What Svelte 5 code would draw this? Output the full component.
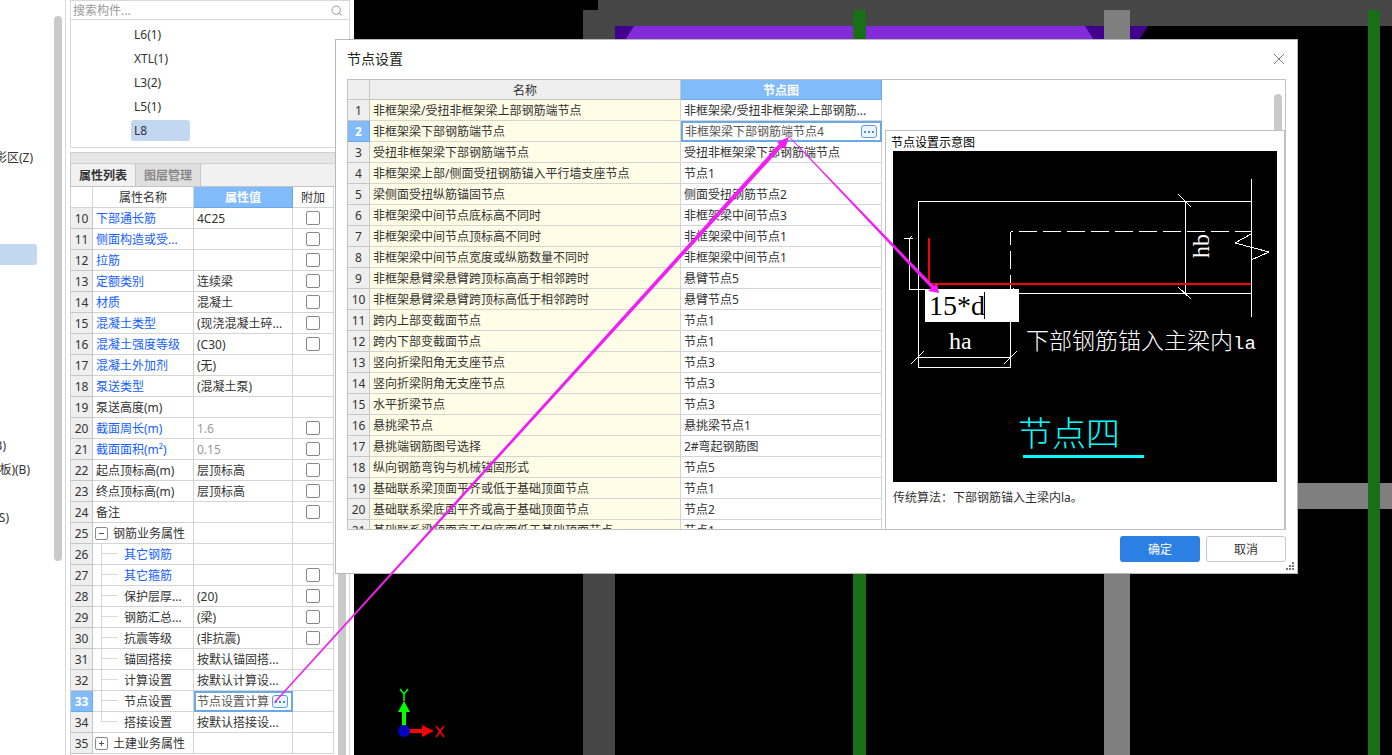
<script>
  const treeItems = [
    { text: "影区(Z)", row: 7, end: 33 },
    { text: "", row: 11, end: 37, selected: true },
    { text: "B)", row: 19, end: 6 },
    { text: "板)(B)", row: 20, end: 30 },
    { text: "S)", row: 22, end: 9 }
  ];

  const components = ["L6(1)", "XTL(1)", "L3(2)", "L5(1)", "L8"];
  let currentComponent = $state("L8");

  const properties = [
    { no: 10, name: "下部通长筋", value: "4C25", link: true, check: true },
    { no: 11, name: "侧面构造或受...", value: "", link: true, check: true },
    { no: 12, name: "拉筋", value: "", link: true, check: true },
    { no: 13, name: "定额类别", value: "连续梁", link: true, check: true },
    { no: 14, name: "材质", value: "混凝土", link: true, check: true },
    { no: 15, name: "混凝土类型", value: "(现浇混凝土碎...", link: true, check: true },
    { no: 16, name: "混凝土强度等级", value: "(C30)", link: true, check: true },
    { no: 17, name: "混凝土外加剂", value: "(无)", link: true },
    { no: 18, name: "泵送类型", value: "(混凝土泵)", link: true },
    { no: 19, name: "泵送高度(m)", value: "" },
    { no: 20, name: "截面周长(m)", value: "1.6", link: true, check: true, muted: true },
    { no: 21, name: "截面面积(m²)", value: "0.15", link: true, check: true, muted: true },
    { no: 22, name: "起点顶标高(m)", value: "层顶标高", check: true },
    { no: 23, name: "终点顶标高(m)", value: "层顶标高", check: true },
    { no: 24, name: "备注", value: "", check: true },
    { no: 25, name: "钢筋业务属性", value: "", group: "open" },
    { no: 26, name: "其它钢筋", value: "", link: true, child: true },
    { no: 27, name: "其它箍筋", value: "", link: true, child: true, check: true },
    { no: 28, name: "保护层厚...", value: "(20)", child: true, check: true },
    { no: 29, name: "钢筋汇总...", value: "(梁)", child: true, check: true },
    { no: 30, name: "抗震等级", value: "(非抗震)", child: true, check: true },
    { no: 31, name: "锚固搭接", value: "按默认锚固搭...", child: true },
    { no: 32, name: "计算设置", value: "按默认计算设...", child: true },
    { no: 33, name: "节点设置", value: "节点设置计算", child: true, editing: true },
    { no: 34, name: "搭接设置", value: "按默认搭接设...", child: true, last: true },
    { no: 35, name: "土建业务属性", value: "", group: "closed" }
  ];

  const nodes = [
    ["非框架梁/受扭非框架梁上部钢筋端节点", "非框架梁/受扭非框架梁上部钢筋..."],
    ["非框架梁下部钢筋端节点", "非框架梁下部钢筋端节点4"],
    ["受扭非框架梁下部钢筋端节点", "受扭非框架梁下部钢筋端节点"],
    ["非框架梁上部/侧面受扭钢筋锚入平行墙支座节点", "节点1"],
    ["梁侧面受扭纵筋锚固节点", "侧面受扭钢筋节点2"],
    ["非框架梁中间节点底标高不同时", "非框架梁中间节点3"],
    ["非框架梁中间节点顶标高不同时", "非框架梁中间节点1"],
    ["非框架梁中间节点宽度或纵筋数量不同时", "非框架梁中间节点1"],
    ["非框架悬臂梁悬臂跨顶标高高于相邻跨时", "悬臂节点5"],
    ["非框架悬臂梁悬臂跨顶标高低于相邻跨时", "悬臂节点5"],
    ["跨内上部变截面节点", "节点1"],
    ["跨内下部变截面节点", "节点1"],
    ["竖向折梁阳角无支座节点", "节点3"],
    ["竖向折梁阴角无支座节点", "节点3"],
    ["水平折梁节点", "节点3"],
    ["悬挑梁节点", "悬挑梁节点1"],
    ["悬挑端钢筋图号选择", "2#弯起钢筋图"],
    ["纵向钢筋弯钩与机械锚固形式", "节点5"],
    ["基础联系梁顶面平齐或低于基础顶面节点", "节点1"],
    ["基础联系梁底面平齐或高于基础顶面节点", "节点2"],
    ["基础联系梁顶面高于但底面低于基础顶面节点", "节点1"]
  ];
  const selectedNode = 1;
</script>

<div class="workspace">
  <nav class="tree" aria-label="构件类型">
    <ul>
      {#each treeItems as item}
        <li class:selected={item.selected} style="grid-row: {item.row}; width: {item.end}px">
          <span>{item.text}</span>
        </li>
      {/each}
    </ul>
    <div class="thumb"></div>
  </nav>

  <aside class="side">
    <div class="search">
      <input type="text" placeholder="搜索构件..." aria-label="搜索构件" />
      <svg width="12" height="12" viewBox="0 0 12 12">
        <circle cx="5.2" cy="5.2" r="4.2" />
        <path d="M8.2 8.2L10.6 10.6" />
      </svg>
    </div>
    <div class="components">
      {#each components as name}
        <button class:current={name === currentComponent} onclick={() => (currentComponent = name)}>{name}</button>
      {/each}
    </div>
    <div class="splitter"></div>
    <div class="tabs">
      <button class="tab active">属性列表</button>
      <button class="tab">图层管理</button>
    </div>
    <div class="props">
      <table class="grid propGrid">
        <colgroup><col class="colNo" /><col class="colName" /><col class="colValue" /><col class="colAdd" /></colgroup>
        <thead>
          <tr><th></th><th>属性名称</th><th class="active">属性值</th><th>附加</th></tr>
        </thead>
        <tbody>
          {#each properties as p}
            <tr>
              <td class="no" class:activeNo={p.editing}>{p.no}</td>
              <td class="name" class:link={p.link} class:child={p.child} class:last={p.last}>
                {#if p.group}
                  <button class="toggle" aria-label={p.name}>
                    <svg width="7" height="7" viewBox="0 0 7 7">
                      <path d={p.group === "open" ? "M1 3.5H6" : "M1 3.5H6M3.5 1V6"} />
                    </svg>
                  </button>
                {/if}{p.name}
              </td>
              {#if p.editing}
                <td class="editing">
                  <div class="editor">
                    <input type="text" value={p.value} aria-label={p.name} />
                    <button class="more" aria-label="更多"><i></i><i></i><i></i></button>
                  </div>
                </td>
              {:else}
                <td class:muted={p.muted}>{p.value}</td>
              {/if}
              <td class="add">
                {#if p.check}<input type="checkbox" aria-label={"附加 " + p.name} />{/if}
              </td>
            </tr>
          {/each}
        </tbody>
      </table>
      <div class="scroll"></div>
    </div>
  </aside>

  <main class="canvas">
    <svg class="scene">
      <path d="M244 0H1600V26H261V1200H229V10H244Z" fill="#464646" />
      <rect x="261" y="26" width="533" height="60" fill="#41008b" />
      <path d="M280 26H731L769 86H242Z" fill="#832bda" />
      <path d="M794 26L756 86H800V26Z" fill="#000" />
      <rect x="261" y="483" width="1400" height="26" fill="#7f7f7f" />
      <rect x="750" y="10" width="26" height="1200" fill="#7f7f7f" />
      <rect x="499" y="10" width="13" height="1200" fill="#186f18" />
      <rect x="1014" y="10" width="12" height="1200" fill="#186f18" />
      <g class="axis">
        <path d="M48 726V712H44L50 701L56 712H52V726Z" fill="#0f0" />
        <path d="M55 729H68V725L80 731L68 737V733H55Z" fill="#f00" />
        <circle cx="50" cy="731" r="6" fill="#0000c0" />
        <path d="M46 689L50 694L54 689M50 694V701" stroke="#0f0" />
        <path d="M82 726L90 737M90 726L82 737" stroke="#f00" />
      </g>
    </svg>
  </main>

  <div class="dialog" role="dialog" aria-labelledby="dialogTitle">
    <header>
      <h1 id="dialogTitle">节点设置</h1>
      <button class="close" aria-label="关闭">
        <svg width="12" height="12" viewBox="0 0 12 12"><path d="M1 1L11 11M11 1L1 11" /></svg>
      </button>
    </header>

    <div class="content">
      <div class="nodes">
        <table class="grid nodeGrid">
          <colgroup><col class="colNo" /><col class="colNode" /><col class="colPick" /></colgroup>
          <thead>
            <tr><th></th><th>名称</th><th class="active">节点图</th></tr>
          </thead>
          <tbody>
            {#each nodes as [name, value], i}
              <tr>
                <td class="no" class:activeNo={i === selectedNode}>{i + 1}</td>
                <td class="name">{name}</td>
                {#if i === selectedNode}
                  <td class="editing">
                    <div class="editor">
                      <input type="text" {value} aria-label={name} />
                      <button class="more" aria-label="更多"><i></i><i></i><i></i></button>
                    </div>
                  </td>
                {:else}
                  <td>{value}</td>
                {/if}
              </tr>
            {/each}
          </tbody>
        </table>
      </div>
      <div class="right">
        <div class="track"><div></div></div>
        <section class="preview">
          <h2>节点设置示意图</h2>
          <div class="drawing">
            <svg viewBox="0 0 384 331">
              <g class="line">
                <path d="M358.500 50.500H25.500V216.500H117.500V142" />
                <path d="M358.500 28V166M118 142.500H358M292.500 50V142" />
                <path d="M117.500 142V80.500" stroke-dasharray="18 6" />
                <path d="M117.500 80.500H358" stroke-dasharray="18 6" stroke-dashoffset="-8" />
                <path d="M11 87.500H20M16.500 87.500V138.500H33M16 89L19 85M25 206.500H118" />
                <path d="M285 43L298 56M285 136L298 148M18 213L31 200M111 213L124 200M118 140L121 137" />
                <path d="M358 83L342 92L376 101L358 109" />
              </g>
              <path class="bar" d="M36 87V133H358" />
              <text x="56" y="198" class="latin">ha</text>
              <text transform="translate(316 107) rotate(-90)" class="latin">hb</text>
              <text x="133" y="198" class="note">下部钢筋锚入主梁内<tspan class="mono">la</tspan></text>
              <text x="125" y="295" class="caption">节点四</text>
              <path d="M130 305.500H251" stroke="#0ff" stroke-width="3" />
            </svg>
            <input class="length" type="text" value="15*d" aria-label="锚固长度" />
            <span class="caret"></span>
          </div>
          <p>传统算法：下部钢筋锚入主梁内la。</p>
        </section>
      </div>
    </div>

    <footer>
      <button class="ok">确定</button>
      <button class="cancel">取消</button>
    </footer>
    <svg class="grip" width="8" height="8" viewBox="0 0 8 8">
      <path d="M6 0h2v2h-2zM3 3h2v2h-2zM6 3h2v2h-2zM0 6h2v2h-2zM3 6h2v2h-2zM6 6h2v2h-2z" />
    </svg>
  </div>

  <svg class="arrows">
    <path d="M274 702L779 144L777 142L789 137L785 149L782 147L275 703Z" />
    <path d="M788 136L789 136L934 286L937 283L939 293L928 291L931 288Z" />
  </svg>
</div>

<style>
  :global(body) {
    margin: 0;
    background: #fff;
  }

  .workspace {
    position: relative;
    display: flex;
    height: 100vh;
    overflow: hidden;
    font-family: "Noto Sans", "Noto Sans CJK SC", sans-serif;
    font-size: 12px;
    line-height: 16px;
    color: #333;
  }

  button,
  input {
    font: inherit;
    color: inherit;
    margin: 0;
    padding: 0;
    border: none;
    background: none;
    outline: none;
    border-radius: 0;
  }

  /* component type tree */
  .tree {
    flex: none;
    display: flex;
    width: 65px;
    border-right: 1px solid #d9d9d9;
    overflow: hidden;
  }

  .tree ul {
    flex: 1;
    display: grid;
    grid-template-rows: repeat(30, 24px);
    margin: 0;
    padding: 2px 0 0;
    list-style: none;
    align-items: center;
  }

  .tree li {
    grid-column: 1;
    display: flex;
    justify-content: flex-end;
    overflow: hidden;
    white-space: nowrap;
  }

  .tree li.selected {
    height: 21px;
    background: #c2d8f1;
    border-radius: 0 3px 3px 0;
  }

  .thumb {
    width: 8px;
    height: 545px;
    margin: 16px 3px 0 0;
    border-radius: 4px;
    background: #cacaca;
  }

  /* component list and property panel */
  .side {
    flex: none;
    display: flex;
    flex-direction: column;
    width: 279px;
    margin: 0 4px;
    border-right: 1px solid #d9d9d9;
  }

  .search {
    display: flex;
    align-items: center;
    height: 20px;
    box-sizing: border-box;
    padding: 1px 6px 0 2px;
    border: solid #d9d9d9;
    border-width: 1px 0 1px 1px;
  }

  .search input {
    flex: 1;
    min-width: 0;
  }

  .search input::placeholder {
    color: #999;
  }

  .search svg {
    fill: none;
    stroke: #999;
  }

  .components {
    display: flex;
    flex-direction: column;
    align-items: flex-start;
    gap: 3px;
    padding: 4px 0 6px 60px;
    border: solid #d9d9d9;
    border-width: 0 0 1px 1px;
  }

  .components button {
    width: 59px;
    height: 21px;
    padding-left: 3px;
    text-align: left;
    border-radius: 3px;
  }

  .components .current {
    background: #c2d8f1;
  }

  .splitter {
    height: 10px;
    margin-top: 4px;
    background: #e6e6e6;
    border: solid #d0d0d4;
    border-width: 1px 0 1px 1px;
  }

  .tabs {
    display: flex;
    height: 22px;
    background: #f1f1f1;
    border-left: 1px solid #c4c4c8;
    border-bottom: 1px solid #c4c4c8;
  }

  .tab {
    width: 65px;
    padding-top: 2px;
    border-right: 1px solid #c4c4c8;
    background: #dfdfdf;
    color: #888;
    font-weight: bold;
  }

  .tab.active {
    background: #f1f1f1;
    color: #333;
  }

  .props {
    flex: 1;
    min-height: 0;
    display: flex;
    justify-content: space-between;
    overflow: hidden;
    border-left: 1px solid #d0d0d0;
  }

  .scroll {
    width: 8px;
    margin: 0 3px;
    background: #cacaca;
  }

  .grid {
    table-layout: fixed;
    border-collapse: separate;
    border-spacing: 0;
    align-self: flex-start;
  }

  .propGrid {
    width: 263px;
  }

  .nodeGrid {
    width: 534px;
  }

  .colNo {
    width: 22px;
  }

  .colName {
    width: 101px;
  }

  .colValue {
    width: 99px;
  }

  .colAdd {
    width: 41px;
  }

  .colNode {
    width: 311px;
  }

  .colPick {
    width: 201px;
  }

  .grid th,
  .grid td {
    height: 21px;
    box-sizing: border-box;
    padding: 2px 0 0 3px;
    border-right: 1px solid #d4d4d4;
    border-bottom: 1px solid #d4d4d4;
    white-space: nowrap;
    overflow: hidden;
  }

  .grid th {
    padding: 2px 0 0;
    font-weight: normal;
  }

  .nodeGrid th {
    height: 20px;
    background: #efefef;
    border-color: #c6c6c6;
  }

  .grid th.active {
    background: #82bbfa;
    border-color: #6aa8e8;
    color: #fff;
    font-weight: bold;
  }

  .grid td.no {
    padding: 2px 0 0;
    text-align: center;
    background: #efefef;
    border-color: #c6c6c6;
  }

  .grid td.activeNo {
    background: #82bbfa;
    border-color: #6aa8e8;
    color: #fff;
    font-weight: bold;
  }

  .grid .link {
    color: #1560ff;
  }

  .grid .muted {
    color: #999;
  }

  .nodeGrid td.name {
    background: #fffde6;
  }

  .grid td.child {
    position: relative;
    padding-left: 31px;
  }

  .child::before,
  .child::after {
    content: "";
    position: absolute;
    background: #d9d9d9;
  }

  .child::before {
    left: 8px;
    top: 0;
    width: 1px;
    height: 21px;
  }

  .child.last::before {
    height: 10px;
  }

  .child::after {
    left: 9px;
    top: 9px;
    width: 16px;
    height: 1px;
  }

  .toggle {
    display: inline-flex;
    align-items: center;
    justify-content: center;
    width: 13px;
    height: 13px;
    box-sizing: border-box;
    margin: 0 5px 2px -1px;
    border: 1px solid #888;
    border-radius: 2px;
    vertical-align: middle;
  }

  .toggle svg {
    flex: none;
    stroke: #555;
  }

  .grid td.add {
    padding: 0;
    text-align: center;
    line-height: 0;
  }

  .add input {
    appearance: none;
    width: 14px;
    height: 14px;
    border: 1px solid #888;
    border-radius: 2px;
    background: #fff;
    vertical-align: middle;
  }

  .grid td.editing {
    padding: 0;
    border: none;
  }

  .editor {
    display: flex;
    align-items: center;
    height: 21px;
    box-sizing: border-box;
    padding: 0 3px 0 2px;
    border: 2px solid #6aa8e8;
    color: #555;
  }

  .propGrid .editor {
    padding: 0 3px 0 1px;
  }

  .editor input {
    flex: 1;
    min-width: 0;
    height: 16px;
  }

  .more {
    display: flex;
    align-items: center;
    justify-content: center;
    gap: 2px;
    width: 16px;
    height: 13px;
    box-sizing: border-box;
    border: 1px solid #5a9de2;
    border-radius: 3px;
    background: #eef4fc;
  }

  .more i {
    width: 2px;
    height: 2px;
    background: #4a8fdc;
  }

  /* model view */
  .canvas {
    position: relative;
    flex: 1;
    background: #000;
    overflow: hidden;
  }

  .scene,
  .arrows {
    position: absolute;
    left: 0;
    top: 0;
    width: 100%;
    height: 100%;
  }

  .axis path {
    stroke-width: 1.5;
  }

  .arrows {
    fill: #f21df2;
    pointer-events: none;
  }

  /* node settings dialog */
  .dialog {
    position: absolute;
    left: 335px;
    top: 39px;
    width: 963px;
    box-sizing: border-box;
    padding: 0 11px 11px;
    background: #fff;
    border: 1px solid #b8b8b8;
  }

  .dialog header {
    display: flex;
    align-items: center;
    justify-content: space-between;
    height: 37px;
    padding-bottom: 2px;
  }

  .dialog h1 {
    margin: 0;
    font-size: 14px;
    font-weight: normal;
    color: #222;
  }

  .close {
    width: 12px;
    height: 12px;
    margin-right: 1px;
  }

  .close svg {
    display: block;
    stroke: #777;
  }

  .content {
    display: flex;
    height: 449px;
    border: 1px solid #c0c0c0;
    overflow: hidden;
  }

  .nodes {
    flex: none;
    overflow: hidden;
  }

  .right {
    flex: 1;
    display: flex;
    flex-direction: column;
    padding-left: 3px;
  }

  .track {
    display: flex;
    justify-content: flex-end;
    padding: 14px 3px 0 0;
  }

  .track div {
    width: 8px;
    height: 36px;
    border-radius: 4px 4px 0 0;
    background: #cacaca;
  }

  .preview {
    flex: 1;
    border: solid #c0c0c0;
    border-width: 1px 1px 0 1px;
    padding: 4px 7px 0;
  }

  .preview h2 {
    margin: 0 0 0 -2px;
    font-size: 12px;
    font-weight: normal;
    color: #000;
  }

  .preview p {
    margin: 8px 0 0;
  }

  .drawing {
    position: relative;
    background: #000;
    width: 384px;
  }

  .drawing svg {
    display: block;
  }

  .line {
    fill: none;
    stroke: #fff;
    shape-rendering: crispEdges;
  }

  .bar {
    fill: none;
    stroke: #f00;
    stroke-width: 2;
  }

  .drawing text {
    fill: #fff;
    font-weight: 300;
  }

  .drawing .latin {
    font-family: "Liberation Serif", serif;
    font-size: 24px;
  }

  .drawing .mono {
    font-family: "Liberation Mono", monospace;
    font-size: 19px;
  }

  .drawing .note {
    font-family: "Noto Sans CJK SC", sans-serif;
    font-size: 23px;
  }

  .drawing .caption {
    fill: #0ff;
    font-family: "Noto Sans CJK SC", sans-serif;
    font-size: 34px;
  }

  .length {
    position: absolute;
    left: 32px;
    top: 138px;
    width: 94px;
    height: 33px;
    box-sizing: border-box;
    padding-left: 4px;
    background: #fff;
    color: #000;
    font-family: "Liberation Serif", serif;
    font-size: 28px;
  }

  .caret {
    position: absolute;
    left: 91px;
    top: 141px;
    width: 1px;
    height: 27px;
    background: #000;
  }

  .dialog footer {
    display: flex;
    justify-content: flex-end;
    gap: 6px;
    padding-top: 6px;
  }

  .dialog footer button {
    width: 80px;
    height: 26px;
    box-sizing: border-box;
    padding-top: 2px;
    border-radius: 3px;
  }

  .ok {
    background: #2d80e3;
    color: #fff;
  }

  .dialog footer .cancel {
    border: 1px solid #c8c8c8;
  }

  .grip {
    position: absolute;
    right: 3px;
    bottom: 3px;
    fill: #777;
  }
</style>
